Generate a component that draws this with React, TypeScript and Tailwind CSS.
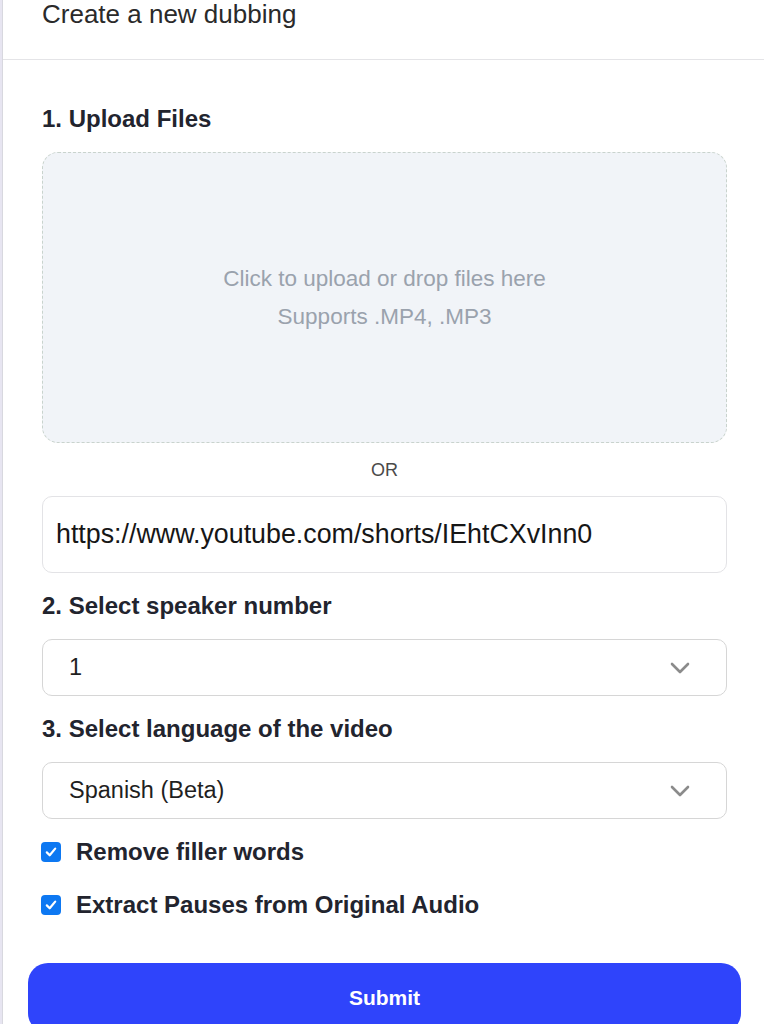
import React from 'react';

const font = { fontFamily: '"Liberation Sans", Arial, sans-serif' };

const Chevron = () => (
  <svg width="22" height="14" viewBox="0 0 22 14" fill="none">
    <path d="M3 3 L11 11 L19 3" stroke="#8b8b8b" strokeWidth="2.6" strokeLinecap="round" strokeLinejoin="round" />
  </svg>
);

const CheckBox = ({ label }: { label: string }) => (
  <label className="flex items-center h-[28px]">
    <span className="flex items-center justify-center w-[20px] h-[20px] rounded-[4px] bg-[#0d78f2] ml-[-1px]">
      <svg width="14" height="14" viewBox="0 0 14 14" fill="none">
        <path d="M2.8 7.4 L5.7 10.3 L11.2 3.6" stroke="white" strokeWidth="2.2" strokeLinecap="round" strokeLinejoin="round" />
      </svg>
    </span>
    <span className="ml-[15px] text-[24px] leading-[28px] font-bold text-[#22242e]">{label}</span>
  </label>
);

const SelectBox = ({ value }: { value: string }) => (
  <div className="flex items-center justify-between h-[57px] rounded-[10px] border border-[#d6d6d6] bg-white pl-[26px] pr-[35px]">
    <span className="text-[23.5px] text-[#1f1f1f]">{value}</span>
    <Chevron />
  </div>
);

const Label = ({ children }: { children: React.ReactNode }) => (
  <h2 className="text-[24px] leading-[28px] font-bold text-[#22242e]">{children}</h2>
);

export default function App() {
  return (
    <div style={font} className="min-h-screen bg-[#e7e5f1] pl-[2px]">
      <div className="min-h-screen bg-white border-l border-[#d8d8df] overflow-hidden">
        {/* header */}
        <div className="h-[60px] border-b border-[#e4e4e7] pl-[39px]">
          <h1 className="text-[26px] leading-[28px] text-[#2a2a2a]">Create a new dubbing</h1>
        </div>

        <div className="pl-[25px] pr-[23px]">
          <div className="pl-[14px] pr-[14px] pt-[45px]">
            <Label>1. Upload Files</Label>

            <div className="mt-[19px] h-[291px] rounded-[16px] border border-dashed border-[#c9d3cd] bg-[#f1f4f8] flex flex-col items-center justify-center text-[22.5px] leading-[38px] text-[#9aa2ad]">
              <p>Click to upload or drop files here</p>
              <p>Supports .MP4, .MP3</p>
            </div>

            <div className="mt-[15px] text-center text-[18px] leading-[24px] text-[#4a4a4a]">OR</div>

            <div className="mt-[14px] h-[77px] flex items-center rounded-[10px] border border-[#e3e3e6] pl-[13px]">
              <span className="text-[26.8px] text-[#161616]">https://www.youtube.com/shorts/IEhtCXvInn0</span>
            </div>

            <div className="mt-[19px]">
              <Label>2. Select speaker number</Label>
            </div>
            <div className="mt-[19px]">
              <SelectBox value="1" />
            </div>

            <div className="mt-[19px]">
              <Label>3. Select language of the video</Label>
            </div>
            <div className="mt-[19px]">
              <SelectBox value="Spanish (Beta)" />
            </div>

            <div className="mt-[19px] flex flex-col gap-[25px]">
              <CheckBox label="Remove filler words" />
              <CheckBox label="Extract Pauses from Original Audio" />
            </div>
          </div>

          <button className="mt-[44px] w-full h-[70px] rounded-[20px] bg-[#2f44fb] text-white text-[21px] font-bold">
            Submit
          </button>
        </div>
      </div>
    </div>
  );
}
